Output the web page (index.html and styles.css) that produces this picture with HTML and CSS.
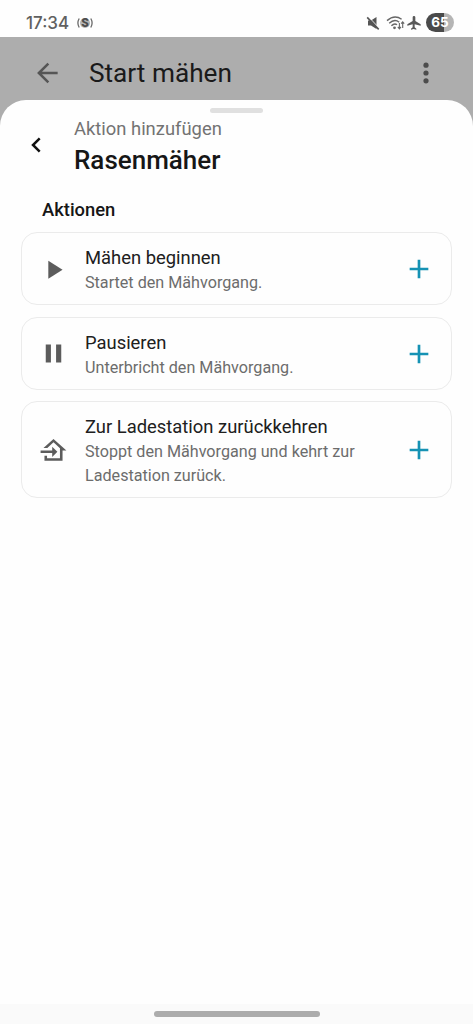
FILE: index.html
```html
<!DOCTYPE html>
<html lang="de">
<head>
<meta charset="utf-8">
<meta name="viewport" content="width=device-width, initial-scale=1">
<title>Aktion hinzufügen</title>
<link rel="stylesheet" href="styles.css">
</head>
<body>
<div class="screen">
  <header class="status">
    <span class="time">17:34</span>
    <svg class="badge-s" viewBox="0 0 18 14" width="18" height="14">
      <circle cx="9" cy="7" r="5" fill="#b4b4b4"/>
      <path d="M3.200 2.500Q.6 7 3.200 11.500M14.800 2.500Q17.400 7 14.800 11.500" fill="none" stroke="#6a6a6a" stroke-width="1.300"/>
      <text x="9" y="11.300" text-anchor="middle" class="badge-letter">S</text>
    </svg>
    <div class="indicators">
      <svg class="mute" viewBox="0 0 16 16" width="16" height="16">
        <path d="M3 5.500h3L11.500 2v12L6 10.500H3z" fill="#555"/>
        <path d="M3.300 1.700l11.500 12" stroke="#fefefe" stroke-width="1"/>
        <path d="M2.200 2.400l11.500 12" stroke="#555" stroke-width="1.600"/>
      </svg>
      <svg class="wifi" viewBox="0 0 19 16" width="19" height="16">
        <g fill="none" stroke="#666" stroke-width="1.400">
          <path d="M1 5.600Q8.500-.9 15.600 4.300"/>
          <path d="M3.200 8.300Q8.500 3.400 13.200 7.200"/>
          <path d="M5.400 10.800Q8.500 7.600 11 9.800"/>
        </g>
        <circle cx="8.500" cy="12.800" r="1.400" fill="#666"/>
        <path d="M13.400 8v5.500M11.800 11.900l1.600 1.900 1.600-1.900M16.700 13V7M15.200 8.700l1.500-1.900 1.500 1.900" fill="none" stroke="#666" stroke-width="1.100"/>
      </svg>
      <svg class="plane" viewBox="0 0 24 24" width="16" height="16">
        <path d="M22 16v-2.300l-8-4.700V3.500a2 2 0 0 0-4 0V9l-8 4.700V16l8-2v4.500l-2.500 2V22l4-1 4 1v-1.500l-2.500-2V14z" fill="#585858"/>
      </svg>
      <span class="battery">65</span>
    </div>
  </header>

  <div class="appbar">
    <svg class="back" viewBox="0 0 24 24" width="32" height="32">
      <path d="M20 12H6M13 4.900L5.900 12l7.100 7.100" fill="none" stroke="#555" stroke-width="1.900"/>
    </svg>
    <h1 class="appbar-title">Start mähen</h1>
    <svg class="more" viewBox="0 0 8 24" width="8" height="24">
      <g fill="#4c4c4c"><circle cx="4" cy="4.200" r="2.600"/><circle cx="4" cy="12" r="2.600"/><circle cx="4" cy="19.800" r="2.600"/></g>
    </svg>
  </div>

  <main class="sheet">
    <div class="grabber"></div>
    <div class="sheet-head">
      <svg class="chevron" viewBox="0 0 14 18" width="14" height="18">
        <path d="M10.700 2.300L4 9l6.700 6.700" fill="none" stroke="#111" stroke-width="2.500"/>
      </svg>
      <div class="headings">
        <p class="overline">Aktion hinzufügen</p>
        <h2 class="device">Rasenmäher</h2>
      </div>
    </div>
    <h3 class="section">Aktionen</h3>
    <ul class="actions">
      <li class="card">
        <svg class="icon" viewBox="0 0 24 24"><path d="M8 5.140v14l11-7z"/></svg>
        <div class="copy"><p class="name">Mähen beginnen</p><p class="desc">Startet den Mähvorgang.</p></div>
        <svg class="plus" viewBox="0 0 24 24"><path d="M19 13h-6v6h-2v-6H5v-2h6V5h2v6h6z"/></svg>
      </li>
      <li class="card">
        <svg class="icon" viewBox="0 0 24 24"><path d="M14 19h4V5h-4M6 19h4V5H6z"/></svg>
        <div class="copy"><p class="name">Pausieren</p><p class="desc">Unterbricht den Mähvorgang.</p></div>
        <svg class="plus" viewBox="0 0 24 24"><path d="M19 13h-6v6h-2v-6H5v-2h6V5h2v6h6z"/></svg>
      </li>
      <li class="card">
        <svg class="icon" viewBox="0 0 24 24"><path d="M15 13l-4 4v-3H2v-2h9V9l4 4M5 20v-4h2v2h10v-7.810l-5-4.500L7.210 10H4.220L12 3l10 9h-3v8H5z"/></svg>
        <div class="copy"><p class="name">Zur Ladestation zurückkehren</p><p class="desc">Stoppt den Mähvorgang und kehrt zur Ladestation zurück.</p></div>
        <svg class="plus" viewBox="0 0 24 24"><path d="M19 13h-6v6h-2v-6H5v-2h6V5h2v6h6z"/></svg>
      </li>
    </ul>
  </main>
  <footer class="navbar"><div class="gesture"></div></footer>
</div>
</body>
</html>
```

FILE: styles.css
```css
* { box-sizing: border-box; }
body, h1, h2, h3, p, ul { margin: 0; padding: 0; }
body { font-family: Roboto, "Noto Sans", sans-serif; color: #1c1c1c; background: #adadad; }
svg { display: block; flex: none; }

.screen { display: flex; flex-direction: column; width: 473px; height: 1024px; overflow: hidden; }

.status { display: flex; align-items: center; flex: none; height: 37px; padding: 8px 19px 0 26px; background: #fefefe; }
.time { width: 43px; font: 500 17px/22px Inter, Roboto, sans-serif; color: #606060; white-space: nowrap; }
.badge-s { margin-left: 7px; }
.badge-letter { font: 900 12px Roboto, sans-serif; fill: #4c4c4c; }
.indicators { display: flex; align-items: center; margin-left: auto; }
.wifi { margin-left: 5px; }
.plane { margin-left: 1px; }
.battery { width: 28px; height: 19px; margin-left: 4px; border-radius: 10px; background: linear-gradient(90deg, #4a4a4a 65%, #b5b5b5 65%); color: #fff; font: 700 13.5px/19px Inter, Roboto, sans-serif; text-align: center; }

.appbar { display: flex; align-items: center; flex: none; height: 63px; padding: 9px 43px 0 31px; }
.appbar-title { margin-left: 26px; font-size: 26.2px; line-height: 32px; font-weight: 400; color: #1a1a1a; }
.more { margin-left: auto; }

.sheet { flex: 1; padding: 8px 21px 0; background: #fefefe; border-radius: 26px 26px 0 0; }
.grabber { width: 53px; height: 5px; margin: 0 auto; border-radius: 3px; background: #e0e0e0; }
.sheet-head { display: flex; align-items: center; gap: 31px; padding: 3px 0 0 8px; }
.chevron { margin-bottom: 5px; }
.overline { font-size: 18.4px; line-height: 25px; color: #737373; }
.device { font-size: 26px; line-height: 38px; font-weight: 500; color: #161616; }
.section { margin: 19px 0 10px 21px; font-size: 18.4px; line-height: 24px; font-weight: 500; color: #161616; }

.actions { display: flex; flex-direction: column; gap: 11.1px; list-style: none; }
.card { display: flex; align-items: center; padding: 11.2px 16px 10.100px 16px; border: 1.500px solid #ebebeb; border-radius: 16px; }
.icon { width: 31px; height: 31px; fill: #5c5c5c; }
.copy { flex: 1; margin-left: 16px; }
.name { font-size: 18.4px; line-height: 27px; color: #202020; }
.desc { max-width: 290px; font-size: 16.15px; line-height: 23.2px; color: #6c6c6c; }
.plus { width: 32px; height: 32px; fill: #1592b4; }

.navbar { display: flex; justify-content: center; flex: none; height: 20px; padding-top: 7px; background: #fafafa; }
.gesture { width: 166px; height: 6px; border-radius: 3px; background: #acacac; }
```
